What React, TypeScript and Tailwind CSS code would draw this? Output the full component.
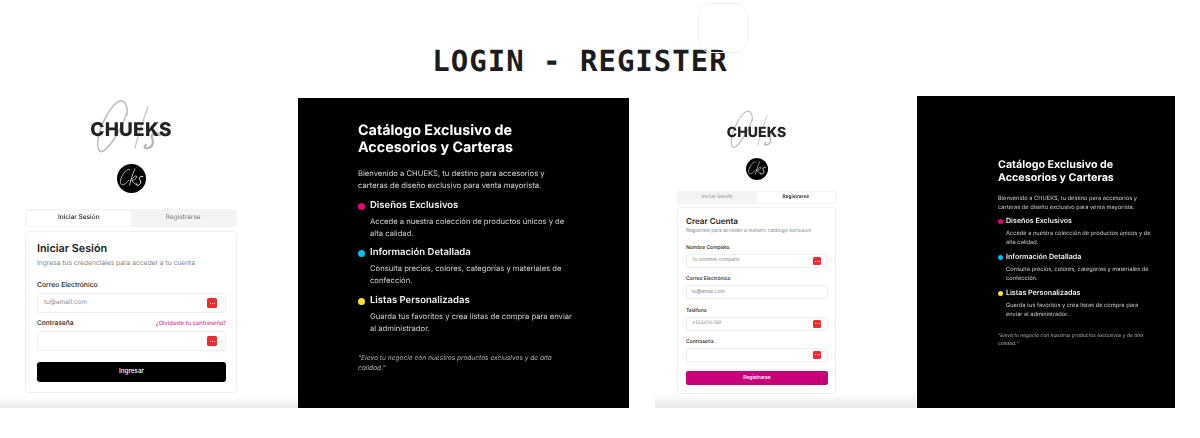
const features = [
  {
    title: "Diseños Exclusivos",
    text: "Accede a nuestra colección de productos únicos y de alta calidad.",
    dot: "bg-[#e6007e]",
  },
  {
    title: "Información Detallada",
    text: "Consulta precios, colores, categorías y materiales de confección.",
    dot: "bg-[#00c2f0]",
  },
  {
    title: "Listas Personalizadas",
    text: "Guarda tus favoritos y crea listas de compra para enviar al administrador.",
    dot: "bg-[#ffe02e]",
  },
];

// trazos del monograma, el texto CHUEKS va encima
const Flourish = ({ className }: { className: string }) => (
  <svg viewBox="0 0 70 60" fill="none" className={className}>
    <path
      d="M31 17C32 6 28 2 24 3C16 5 3 28 2 42C1 52 4 55 7 53C15 48 25 32 31 15"
      stroke="#bfbfbf"
      strokeWidth="1.600"
      strokeLinecap="round"
    />
    <path d="M52 9C48 20 42 36 39 50" stroke="#c6c6c6" strokeWidth="1.300" strokeLinecap="round" />
    <path
      d="M64 37C60 33 55 36 56 40C58 44 57 49 52 50C49 51 47 49 50 47"
      stroke="#b5b5b5"
      strokeWidth="2.200"
      strokeLinecap="round"
    />
  </svg>
);

const Badge = ({ className }: { className: string }) => (
  <div className={`flex items-center justify-center rounded-full bg-black ${className}`}>
    <svg viewBox="0 0 30 30" fill="none" className="h-full w-full">
      <path d="M13 6C11 3 4 12 3.500 18C3.500 23 7 23 12 17" stroke="#eee" strokeWidth="0.800" strokeLinecap="round" />
      <path
        d="M18.500 5C16 11 14 17 13 22M14 18C16 14 20 11 20.500 13C20 16 16 17 15.500 17.500C17 19 18.500 21 20 21"
        stroke="#eee"
        strokeWidth="0.800"
        strokeLinecap="round"
      />
      <path d="M26.500 13C24 12.500 22 14 23.500 16C25 18 25 21 22 22C20 22.500 19.500 21 20 20.500" stroke="#fff" strokeWidth="1" strokeLinecap="round" />
    </svg>
  </div>
);

const KeyIcon = ({ className }: { className: string }) => (
  <span className={`flex items-center justify-center gap-px rounded-[1.5px] bg-[#ee2b2e] ${className}`}>
    <span className="h-px w-px rounded-full bg-white" />
    <span className="h-px w-px rounded-full bg-white" />
    <span className="h-px w-px rounded-full bg-white" />
  </span>
);

const BottomFade = ({ className }: { className: string }) => (
  <div className={`absolute inset-x-0 bottom-0 bg-gradient-to-b from-transparent to-[#e9e9e9] ${className}`} />
);

const LoginField = ({ placeholder }: { placeholder?: string }) => (
  <div className="flex h-[20px] items-center justify-between rounded-[3px] border border-[#f0f0f0] pl-[6px] pr-[8px] text-[6.400px] text-[#8a8a90]">
    <span>{placeholder}</span>
    <KeyIcon className="h-[10px] w-[10px]" />
  </div>
);

const RegisterField = ({ label, placeholder, icon = true }: { label: string; placeholder?: string; icon?: boolean }) => (
  <div>
    <div className="mb-[2px] h-[8px] text-[5px] leading-[8px] font-medium text-[#222]">{label}</div>
    <div className="flex h-[14px] items-center justify-between rounded-[2px] border border-[#efefef] pl-[5px] pr-[6px] text-[4.900px] text-[#85858b]">
      <span>{placeholder}</span>
      {icon && <KeyIcon className="h-[8px] w-[8px]" />}
    </div>
  </div>
);

const LoginPanel = () => (
  <div className="relative mt-[2px] h-[310px] w-[298px] shrink-0 bg-white pl-[25px] pr-[61px]">
    <BottomFade className="h-[10px]" />
    <div className="relative flex h-[56px] items-center justify-center">
      <Flourish className="absolute top-[0px] left-[71px] h-[60px] w-[70px]" />
      <span className="relative mt-[9px] text-[19px] font-extrabold tracking-[0.2px] text-[#232323]">CHUEKS</span>
    </div>
    <div className="mt-[10px] flex justify-center">
      <Badge className="h-[29px] w-[29px]" />
    </div>
    <div className="mt-[16px] flex h-[18px] rounded-[3px] bg-[#f4f4f5] p-[1.5px] text-[6.500px]">
      <div className="flex flex-1 items-center justify-center rounded-[2px] bg-white font-medium text-[#222]">Iniciar Sesión</div>
      <div className="flex flex-1 items-center justify-center text-[#777]">Registrarse</div>
    </div>
    <div className="relative mt-[4px] h-[162px] rounded-[4px] border border-[#f0f0f0] bg-white pl-[11px] pr-[10px] pt-[9px]">
      <h2 className="h-[16px] text-[10.800px] leading-[16px] font-semibold text-[#1c1c1c]">Iniciar Sesión</h2>
      <p className="mt-[1px] text-[6.700px] leading-[10px] text-[#85858b]">Ingresa tus credenciales para acceder a tu cuenta</p>
      <div className="mt-[12px] mb-[3px] h-[10px] text-[6.800px] leading-[10px] font-medium text-[#222]">Correo Electrónico</div>
      <LoginField placeholder="tu@email.com" />
      <div className="mt-[5.500px] mb-[1.500px] flex h-[11px] items-center justify-between text-[6.600px] font-medium text-[#222]">
        <span>Contraseña</span>
        <span className="text-[5.750px] font-normal text-[#d6008a]">¿Olvidaste tu contraseña?</span>
      </div>
      <LoginField />
      <button className="mt-[11px] flex h-[20px] w-full items-center justify-center rounded-[3px] bg-black text-[6.300px] font-medium text-white">
        Ingresar
      </button>
    </div>
  </div>
);

const RegisterPanel = () => (
  <div className="relative h-[312px] w-[262px] shrink-0 bg-white pl-[22px] pr-[81px]">
    <BottomFade className="h-[14px]" />
    <div className="relative mt-[12px] flex h-[46px] items-center justify-center">
      <Flourish className="absolute top-[1px] left-[53px] h-[43px] w-[50px]" />
      <span className="relative mt-[2px] text-[14px] font-extrabold tracking-[0.1px] text-[#232323]">CHUEKS</span>
    </div>
    <div className="mt-[4px] flex justify-center">
      <Badge className="h-[22px] w-[22px]" />
    </div>
    <div className="mt-[11px] flex h-[13px] rounded-[2px] bg-[#f4f4f5] p-[1px] text-[4.800px]">
      <div className="flex flex-1 items-center justify-center text-[#888]">Iniciar Sesión</div>
      <div className="flex flex-1 items-center justify-center rounded-[2px] bg-white font-semibold text-[#222]">Registrarse</div>
    </div>
    <div className="relative mt-[3px] h-[187px] rounded-[3px] border border-[#f0f0f0] bg-white pl-[8px] pr-[7px] pt-[7.500px]">
      <h2 className="h-[10px] text-[8.100px] leading-[10px] font-semibold text-[#1c1c1c]">Crear Cuenta</h2>
      <p className="mt-[1px] text-[5px] leading-[8px] text-[#85858b]">Regístrate para acceder a nuestro catálogo exclusivo</p>
      <div className="mt-[9.500px] flex flex-col gap-[7.300px]">
        <RegisterField label="Nombre Completo" placeholder="Tu nombre completo" />
        <RegisterField label="Correo Electrónico" placeholder="tu@email.com" icon={false} />
        <RegisterField label="Teléfono" placeholder="+123456789" />
        <RegisterField label="Contraseña" />
      </div>
      <button className="mt-[9px] flex h-[14px] w-full items-center justify-center rounded-[2px] bg-[#c8007a] text-[5px] font-semibold text-white">
        Registrarse
      </button>
    </div>
  </div>
);

const LargeInfo = () => (
  <div className="mt-[2px] h-[310px] w-[331px] shrink-0 bg-black pt-[24px] pl-[60px] pr-[56px] text-white">
    <h2 className="text-[14.300px] leading-[17px] font-bold">Catálogo Exclusivo de Accesorios y Carteras</h2>
    <p className="mt-[11.500px] text-[7.650px] leading-[12px] text-[#d8d8d8]">
      Bienvenido a CHUEKS, tu destino para accesorios y carteras de diseño exclusivo para venta mayorista.
    </p>
    <ul className="mt-[7.500px] flex flex-col gap-[7px]">
      {features.map((f) => (
        <li key={f.title}>
          <div className="flex h-[14px] items-center gap-[5px]">
            <span className={`h-[7px] w-[7px] rounded-full ${f.dot}`} />
            <span className="text-[9.500px] font-semibold text-[#f2f2f2]">{f.title}</span>
          </div>
          <p className="mt-[2.500px] pl-[12px] text-[7.650px] leading-[12px] text-[#d0d0d0]">{f.text}</p>
        </li>
      ))}
    </ul>
    <p className="mt-[18px] text-[6.600px] leading-[10px] text-[#b5b5b5] italic">
      "Eleva tu negocio con nuestros productos exclusivos y de alta calidad."
    </p>
  </div>
);

const SmallInfo = () => (
  <div className="h-[312px] w-[258px] shrink-0 bg-black pt-[62px] pl-[81px] pr-[22px] text-white">
    <h2 className="text-[10.700px] leading-[13px] font-bold">Catálogo Exclusivo de Accesorios y Carteras</h2>
    <p className="mt-[10px] text-[5.700px] leading-[9.250px] text-[#d0d0d0]">
      Bienvenido a CHUEKS, tu destino para accesorios y carteras de diseño exclusivo para venta mayorista.
    </p>
    <ul className="mt-[3px] flex flex-col gap-[5px]">
      {features.map((f) => (
        <li key={f.title}>
          <div className="flex h-[11px] items-center gap-[3px]">
            <span className={`h-[5px] w-[5px] rounded-full ${f.dot}`} />
            <span className="text-[7.100px] font-semibold text-[#f2f2f2]">{f.title}</span>
          </div>
          <p className="mt-[2px] pl-[8px] text-[5.700px] leading-[9px] text-[#d0d0d0]">{f.text}</p>
        </li>
      ))}
    </ul>
    <p className="mt-[13.500px] text-[4.950px] leading-[8px] text-[#aaa] italic">
      "Eleva tu negocio con nuestros productos exclusivos y de alta calidad."
    </p>
  </div>
);

export default function App() {
  return (
    <div className="relative h-[438px] w-[1200px] overflow-hidden bg-white font-['Inter',sans-serif] [text-rendering:geometricPrecision]">
      {/* cuadro fantasma arriba del titulo */}
      <div className="absolute top-[3px] left-[698px] h-[50px] w-[50px] rounded-[13px] border border-[#f1f0fb]" />
      <div className="flex h-[96px] justify-center pt-[43px] pr-[40px]">
        <h1 className="font-['DejaVu_Sans_Mono',monospace] text-[29px] leading-[36px] font-bold tracking-[1px] text-[#1c1c1c]">
          LOGIN - REGISTER
        </h1>
      </div>
      {/* la captura original viene algo borrosa */}
      <div className="flex items-start blur-[0.5px]">
        <LoginPanel />
        <LargeInfo />
        <div className="w-[26px] shrink-0" />
        <RegisterPanel />
        <SmallInfo />
      </div>
    </div>
  );
}
